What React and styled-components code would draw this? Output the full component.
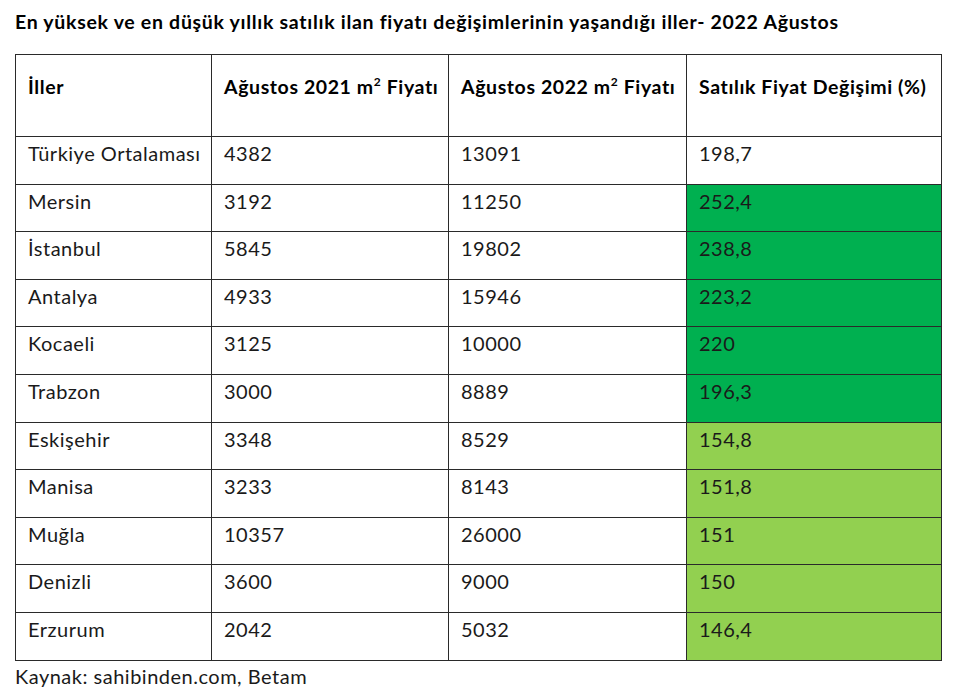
import styled, { createGlobalStyle } from 'styled-components';

const GlobalStyle = createGlobalStyle`
    body {
        margin: 0;
        background: #ffffff;
        font-family: Lato, "Open Sans", sans-serif;
        color: #111111;
    }
`;

const Page = styled.div`
    width: 960px;
    height: 695px;
    padding: 10px 0 0 15px;
    box-sizing: border-box;
`;

const Title = styled.h1`
    margin: 0 0 20px;
    font-size: 19.5px;
    line-height: 24px;
    font-weight: 700;
    letter-spacing: 0.7px;
    color: #000000;
    white-space: nowrap;
`;

const Table = styled.table`
    width: 926px;
    border-collapse: collapse;
    table-layout: fixed;
`;

const Row = styled.tr`
    height: ${({ $header }) => ($header ? '82px' : '47.6px')};
`;

const HeadCell = styled.th`
    border: 1px solid #2a2a2a;
    padding: 20px 0 0 12px;
    vertical-align: top;
    text-align: left;
    font-size: 19.5px;
    line-height: 24px;
    font-weight: 700;
    letter-spacing: 0.6px;
    color: #000000;
    white-space: nowrap;

    sup {
        font-size: 12px;
        line-height: 0;
        vertical-align: 8px;
    }
`;

const Cell = styled.td`
    border: 1px solid #2a2a2a;
    padding: 4px 0 0 12px;
    vertical-align: top;
    font-size: 20px;
    line-height: 24px;
    letter-spacing: 0.5px;
    color: #1a1a1a;
    white-space: nowrap;
    background: ${({ $tone }) =>
        $tone === 'high' ? '#00b050' : $tone === 'mid' ? '#92d050' : '#ffffff'};
`;

const Source = styled.div`
    margin-top: 3px;
    font-size: 20px;
    line-height: 24px;
    letter-spacing: 0.5px;
    color: #1a1a1a;
`;

const rows = [
    ['Türkiye Ortalaması', '4382', '13091', '198,7', null],
    ['Mersin', '3192', '11250', '252,4', 'high'],
    ['İstanbul', '5845', '19802', '238,8', 'high'],
    ['Antalya', '4933', '15946', '223,2', 'high'],
    ['Kocaeli', '3125', '10000', '220', 'high'],
    ['Trabzon', '3000', '8889', '196,3', 'high'],
    ['Eskişehir', '3348', '8529', '154,8', 'mid'],
    ['Manisa', '3233', '8143', '151,8', 'mid'],
    ['Muğla', '10357', '26000', '151', 'mid'],
    ['Denizli', '3600', '9000', '150', 'mid'],
    ['Erzurum', '2042', '5032', '146,4', 'mid'],
];

function App() {
    return (
        <Page>
            <GlobalStyle />
            <Title>
                En yüksek ve en düşük yıllık satılık ilan fiyatı değişimlerinin yaşandığı iller- 2022 Ağustos
            </Title>
            <Table>
                <colgroup>
                    <col style={{ width: 196 }} />
                    <col style={{ width: 237 }} />
                    <col style={{ width: 238 }} />
                    <col style={{ width: 255 }} />
                </colgroup>
                <thead>
                    <Row $header>
                        <HeadCell>İller</HeadCell>
                        <HeadCell>
                            Ağustos 2021 m<sup>2</sup> Fiyatı
                        </HeadCell>
                        <HeadCell>
                            Ağustos 2022 m<sup>2</sup> Fiyatı
                        </HeadCell>
                        <HeadCell>Satılık Fiyat Değişimi (%)</HeadCell>
                    </Row>
                </thead>
                <tbody>
                    {rows.map(([city, y2021, y2022, change, tone]) => (
                        <Row key={city}>
                            <Cell>{city}</Cell>
                            <Cell>{y2021}</Cell>
                            <Cell>{y2022}</Cell>
                            <Cell $tone={tone}>{change}</Cell>
                        </Row>
                    ))}
                </tbody>
            </Table>
            <Source>Kaynak: sahibinden.com, Betam</Source>
        </Page>
    );
}

export default App;
